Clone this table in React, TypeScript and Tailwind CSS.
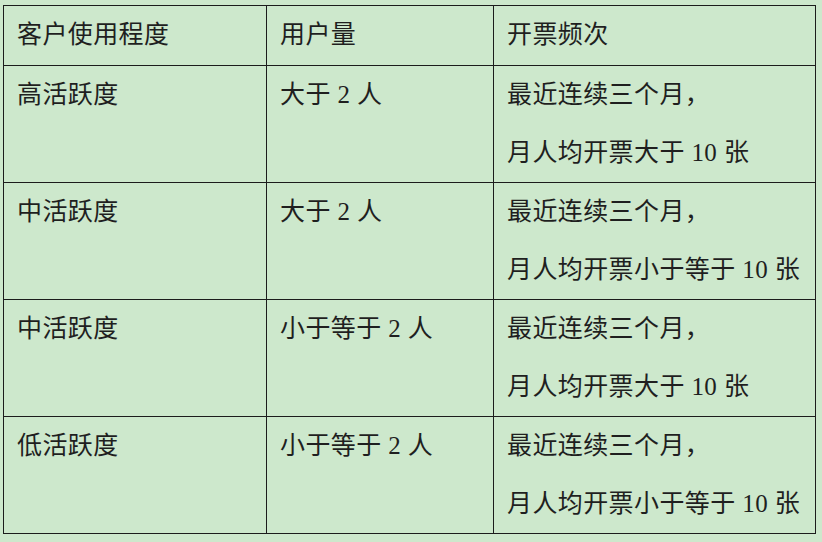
const rows = [
  { level: '高活跃度', users: '大于 2 人', freq: '月人均开票大于 10 张' },
  { level: '中活跃度', users: '大于 2 人', freq: '月人均开票小于等于 10 张' },
  { level: '中活跃度', users: '小于等于 2 人', freq: '月人均开票大于 10 张' },
  { level: '低活跃度', users: '小于等于 2 人', freq: '月人均开票小于等于 10 张' },
];

const cell = 'border border-[#1c1c1c] pl-[13px] align-top';

export default function App() {
  return (
    <div
      className="h-[542px] w-[822px] bg-[#cde8cc] pl-[3px] pt-[5px] text-[25px] leading-[58px] tracking-[0.4px] text-[#1f1f1f]"
      style={{ fontFamily: '"Liberation Serif", "Noto Sans CJK SC", serif' }}
    >
      <table className="w-[812px] table-fixed border-collapse">
        <colgroup>
          <col className="w-[263px]" />
          <col className="w-[227px]" />
          <col className="w-[322px]" />
        </colgroup>
        <thead>
          <tr className="h-[60px]">
            <th className={`${cell} text-left font-normal`}>客户使用程度</th>
            <th className={`${cell} text-left font-normal`}>用户量</th>
            <th className={`${cell} text-left font-normal`}>开票频次</th>
          </tr>
        </thead>
        <tbody>
          {rows.map((r, i) => (
            <tr key={i} className="h-[117px]">
              <td className={cell}>{r.level}</td>
              <td className={cell}>{r.users}</td>
              <td className={`${cell} whitespace-nowrap`}>
                <div>最近连续三个月，</div>
                <div>{r.freq}</div>
              </td>
            </tr>
          ))}
        </tbody>
      </table>
    </div>
  );
}
